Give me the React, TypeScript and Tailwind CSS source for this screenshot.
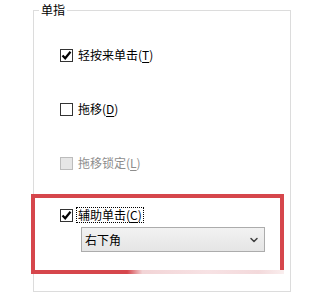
import { ChevronDown } from 'lucide-react';

function Box({ checked, disabled }: { checked?: boolean; disabled?: boolean }) {
    return (
        <span
            className={
                'flex h-[13px] w-[13px] shrink-0 items-center justify-center border ' +
                (disabled ? 'border-[#bcbcbc] bg-[#e6e6e6]' : 'border-[#333333] bg-white')
            }
        >
            {checked && (
                <svg width="11" height="11" viewBox="0 0 11 11">
                    <path d="M1.5 5.5 L4.2 8.3 L9.5 1.8" fill="none" stroke="#000" strokeWidth="2.2" />
                </svg>
            )}
        </span>
    );
}

function Row({
    label,
    hot,
    checked,
    disabled,
    focus,
}: {
    label: string;
    hot: string;
    checked?: boolean;
    disabled?: boolean;
    focus?: boolean;
}) {
    return (
        <div className="flex h-[16px] items-center gap-[3px]">
            <Box checked={checked} disabled={disabled} />
            <span
                className={
                    'whitespace-nowrap px-[1px] leading-[14px] ' +
                    (disabled ? 'text-[#8d8d8d] ' : 'text-black ') +
                    (focus ? 'border border-dotted border-black' : 'border border-transparent')
                }
            >
                {label}(<span className="underline underline-offset-2">{hot}</span>)
            </span>
        </div>
    );
}

export default function App() {
    return (
        <div
            className="h-[299px] w-[299px] overflow-hidden bg-white pl-[33px] pt-[10px] text-[12px]"
            style={{ fontFamily: '"Noto Sans CJK SC", "Liberation Sans", sans-serif' }}
        >
            <div className="relative h-[282px] w-[258px] border border-[#dcdcdc]">
                {/* Title */}
                <span className="absolute -top-[9px] left-[5px] bg-white px-[2px] leading-[16px] text-black">
                    单指
                </span>

                <div className="flex flex-col pl-[26px]">
                    <div className="mt-[36px]">
                        <Row label="轻按来单击" hot="T" checked />
                    </div>
                    <div className="mt-[38px]">
                        <Row label="拖移" hot="D" />
                    </div>
                    <div className="mt-[38px]">
                        <Row label="拖移锁定" hot="L" disabled />
                    </div>
                </div>

                {/* Highlight box */}
                <div className="-ml-[3px] mt-[23px] w-[253px] border-x-4 border-t-4 border-[#d6464c]">
                    <div className="pl-[25px] pt-[9px]">
                        <Row label="辅助单击" hot="C" checked focus />
                    </div>
                    <div className="ml-[46px] mt-[4px] flex h-[25px] w-[184px] items-center justify-between border border-[#acacac] bg-gradient-to-b from-[#f2f2f2] to-[#e5e5e5] pl-[3px] pr-[4px] text-black">
                        <span className="leading-[14px]">右下角</span>
                        <ChevronDown size={12} strokeWidth={3} className="text-[#404040]" />
                    </div>
                    <div className="h-[18px]" />
                </div>
                <div className="-ml-[3px] h-[4px] w-[253px] bg-[linear-gradient(to_right,#d6464c_0%,#d6464c_38%,#f2d4d6_44%,#f7e2e4_70%,#f3d9db_90%,#faeeee_100%)]" />
            </div>
        </div>
    );
}
